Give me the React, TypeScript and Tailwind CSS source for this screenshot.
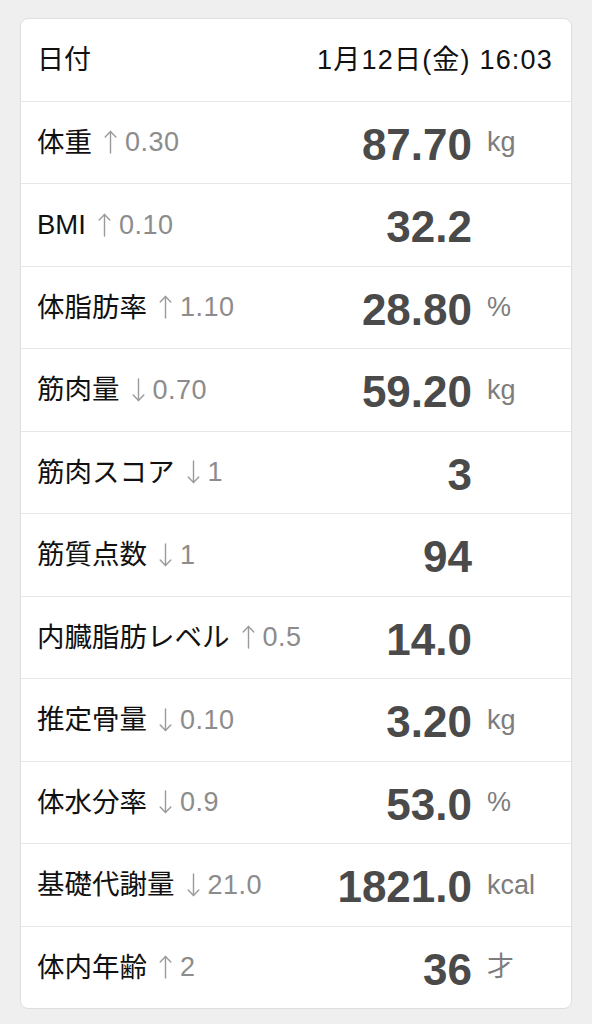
import React from "react";

type Row = {
  label: string;
  dir: "up" | "down";
  delta: string;
  value: string;
  unit?: string;
};

const rows: Row[] = [
  { label: "体重", dir: "up", delta: "0.30", value: "87.70", unit: "kg" },
  { label: "BMI", dir: "up", delta: "0.10", value: "32.2" },
  { label: "体脂肪率", dir: "up", delta: "1.10", value: "28.80", unit: "%" },
  { label: "筋肉量", dir: "down", delta: "0.70", value: "59.20", unit: "kg" },
  { label: "筋肉スコア", dir: "down", delta: "1", value: "3" },
  { label: "筋質点数", dir: "down", delta: "1", value: "94" },
  { label: "内臓脂肪レベル", dir: "up", delta: "0.5", value: "14.0" },
  { label: "推定骨量", dir: "down", delta: "0.10", value: "3.20", unit: "kg" },
  { label: "体水分率", dir: "down", delta: "0.9", value: "53.0", unit: "%" },
  { label: "基礎代謝量", dir: "down", delta: "21.0", value: "1821.0", unit: "kcal" },
  { label: "体内年齢", dir: "up", delta: "2", value: "36", unit: "才" },
];

const font = {
  fontFamily: "'Liberation Sans', 'Noto Sans CJK JP', sans-serif",
};

const Arrow = ({ dir }: { dir: "up" | "down" }) => (
  <svg
    width="13"
    height="24"
    viewBox="0 0 13 24"
    className={dir === "down" ? "rotate-180 ml-[12px] mr-[8px]" : "ml-[12px] mr-[8px]"}
    fill="none"
    stroke="#9a9a9a"
    strokeWidth="1.4"
    strokeLinecap="round"
  >
    <path d="M6.5 1.5 V23" />
    <path d="M1.2 7 L6.5 1.5 L11.8 7" />
  </svg>
);

const App = () => {
  return (
    <div className="w-[592px] h-[1024px] bg-[#efefef] pt-[18px] px-[20px]" style={font}>
      <div className="bg-white border border-[#dedede] rounded-[8px] overflow-hidden">
        {/* header */}
        <div className="h-[81.5px] flex items-center justify-between pl-[16px] pr-[18px] text-[27px] text-[#111]">
          <span>日付</span>
          <span className="tracking-[1.2px]">1月12日(金) 16:03</span>
        </div>

        {rows.map((r) => (
          <div
            key={r.label}
            className="h-[82.5px] border-t border-[#e6e6e6] flex items-center pl-[16px] pr-[20px]"
          >
            <div className="flex-1 flex items-center">
              <span className="text-[27.5px] text-[#111]">{r.label}</span>
              <Arrow dir={r.dir} />
              <span className="text-[27px] text-[#8c8c8c] tracking-[0.5px]">{r.delta}</span>
            </div>
            <span className="mt-[5px] text-[44px] font-bold text-[#4a4a4a] leading-none">
              {r.value}
            </span>
            <span className="w-[79px] pl-[15px] text-[27px] text-[#7d7d7d]">
              {r.unit}
            </span>
          </div>
        ))}
      </div>
    </div>
  );
};

export default App;
